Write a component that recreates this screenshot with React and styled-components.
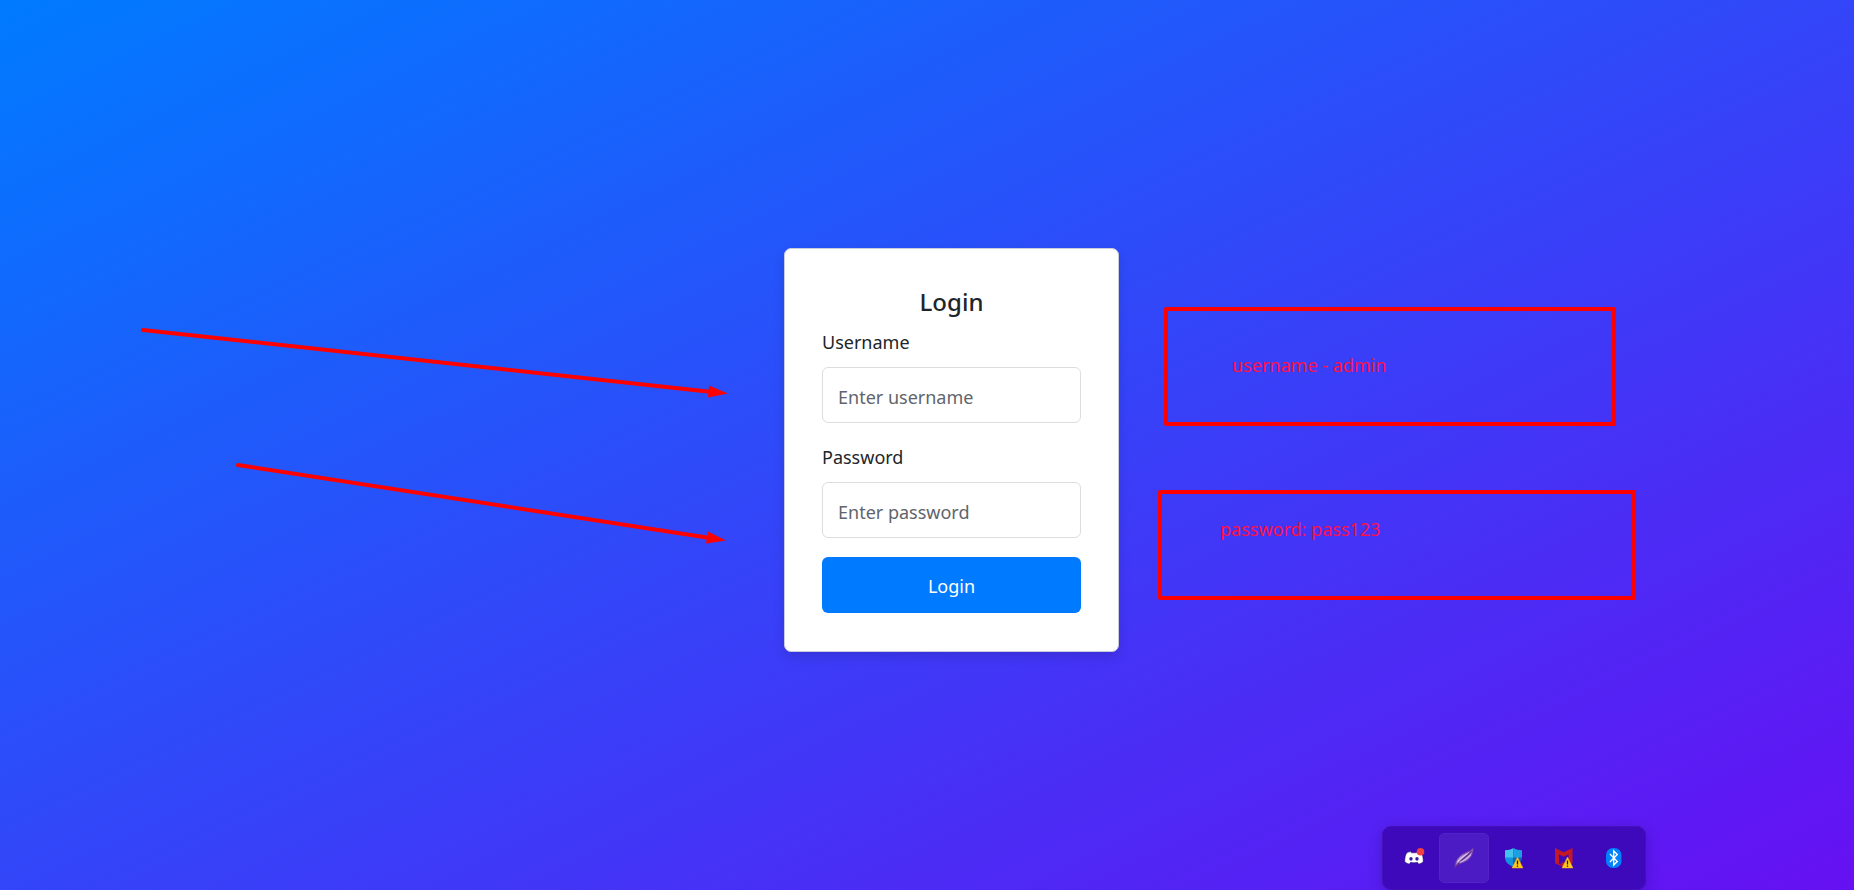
import React from "react";
import styled, { createGlobalStyle } from "styled-components";

const GlobalStyle = createGlobalStyle`
  *, *::before, *::after { box-sizing: border-box; }
  body {
    margin: 0;
    font-family: "Segoe UI", "Noto Sans", "Open Sans", sans-serif;
    font-size: 18px;
    line-height: 30px;
    color: #212529;
  }
`;

const Page = styled.main`
  position: relative;
  min-height: 100vh;
  display: flex;
  align-items: center;
  justify-content: center;
  padding: 10px 0 0 49px;
  overflow: hidden;
  background: linear-gradient(to bottom right, #007bff, #6610f2);
`;

const Card = styled.form`
  width: 335px;
  padding: 38px 37px;
  border: 1px solid #c9ccda;
  border-radius: 7px;
  background: #fff;
  box-shadow: 0 5px 12px rgba(0, 0, 0, 0.12);
`;

const Title = styled.h1`
  margin: 0 0 10px;
  font-size: 24px;
  font-weight: 500;
  line-height: 30px;
  text-align: center;
`;

const Fields = styled.div`
  display: flex;
  flex-direction: column;
  gap: 19px;
`;

const Label = styled.label`
  display: block;
  margin-bottom: 10px;
`;

const Input = styled.input`
  display: block;
  width: 100%;
  height: 56px;
  padding: 4px 15px 0;
  border: 1px solid #dcdddf;
  border-radius: 6px;
  background: #fff;
  color: #212529;
  font: inherit;
  &::placeholder { color: #5f656b; opacity: 1; }
`;

const Submit = styled.button`
  width: 100%;
  height: 56px;
  margin-top: 19px;
  padding: 2px 0 0;
  border: 0;
  border-radius: 6px;
  background: #007bff;
  color: #fff;
  font: inherit;
  cursor: pointer;
`;

const Arrows = styled.svg`
  position: absolute;
  inset: 0;
  width: 100%;
  height: 100%;
  pointer-events: none;
`;

const Note = styled.aside`
  position: absolute;
  left: ${(p) => p.$x}px;
  top: ${(p) => p.$y}px;
  width: ${(p) => p.$w}px;
  height: ${(p) => p.$h}px;
  padding: ${(p) => p.$pad};
  border: 4px solid #f00;
  border-radius: 2px;
  color: #ff0f46;
`;

const Tray = styled.div`
  position: absolute;
  right: 208px;
  bottom: 0;
  display: flex;
  padding: 6px;
  border: 1px solid #4511b4;
  border-radius: 9px;
  background: #3e08bb;
  box-shadow: 0 4px 14px rgba(30, 0, 110, 0.3);
`;

const TrayButton = styled.button`
  width: 50px;
  height: 50px;
  padding: 0;
  display: flex;
  align-items: center;
  justify-content: center;
  border: 1px solid ${(p) => (p.$active ? "#5423c5" : "transparent")};
  border-radius: 5px;
  background: ${(p) => (p.$active ? "#4d1bc3" : "transparent")};
`;

const Warning = () => (
  <g>
    <path d="M14.5 10 20 21H9Z" fill="#ffc81c" stroke="#e6a51c" strokeWidth=".5" strokeLinejoin="round" />
    <path d="M14.5 13.4v4M14.5 18.5v1.3" stroke="#241b10" strokeWidth="1.3" />
  </g>
);

const TrayIcon = ({ children }) => (
  <svg width="22" height="22" viewBox="0 0 22 22" aria-hidden="true">{children}</svg>
);

const DiscordIcon = () => (
  <TrayIcon>
    <path
      d="M7.8 4.6C6.1 4.8 4.6 5.4 3.5 6.2 2.3 8.3 1.7 11 1.8 14.8c1.2 1.2 2.8 2 4.6 2.3l1.1-1.8c2.2.6 4.8.6 7 0l1.1 1.8c1.8-.3 3.4-1.1 4.6-2.3.1-3.8-.5-6.5-1.7-8.6-1.1-.8-2.6-1.4-4.3-1.6l-.7 1.2h-5Z"
      fill="#fff" stroke="#25105f" strokeWidth=".5"
    />
    <ellipse cx="8" cy="11.8" rx="1.7" ry="1.9" fill="#3b1ca0" />
    <ellipse cx="14" cy="11.8" rx="1.7" ry="1.9" fill="#3b1ca0" />
    <circle cx="17.5" cy="4.8" r="3.8" fill="#f23f43" />
  </TrayIcon>
);

const FeatherIcon = () => (
  <TrayIcon>
    <path d="M2.2 20.6C1.7 15 4.5 10.2 9.5 7.2 13.3 4.9 17.7 4.5 20 1c.5 5-1.7 9.3-5.8 12.4C10.7 16 5.7 15.7 2.2 20.6Z" fill="#9a7ccb" stroke="#6f35a6" strokeWidth="1" />
    <path d="M4.5 15.5C7 10.500 12.5 7.8 17.5 5.3" fill="none" stroke="#d6c4e4" strokeWidth="1.400" />
    <path d="M2.3 20.5C6 14.500 12.7 10.800 18.6 4" fill="none" stroke="#6b2590" strokeWidth="1.200" />
    <path d="M6.7 15.5C10.500 13.700 15 11 17.8 7.6" fill="none" stroke="#cdbbe0" strokeWidth="1.200" />
  </TrayIcon>
);

const ShieldIcon = () => (
  <TrayIcon>
    <path d="M10.5 1C8 2.5 5 3.2 2 3.2V11h8.5Z" fill="#42c3ed" />
    <path d="M10.5 1C13 2.5 16 3.2 19 3.2V11h-8.5Z" fill="#1d9fe0" />
    <path d="M2 10.5h8.5V20C5.5 18 2 15 2 10.5Z" fill="#1492df" />
    <path d="M19 10.5h-8.5V20c5-2 8.5-5 8.5-9.5Z" fill="#0b65b8" />
    <Warning />
  </TrayIcon>
);

const ShieldMIcon = () => (
  <TrayIcon>
    <path d="m2 1 8.7 4.2L19.5 1v15.3L10.7 20 2 16.3Z" fill="#c31827" />
    <path d="M6 7.3 10.7 9.7 15.5 7.3V14l-4.8 2-2.2-.9v2.6L6 16.5Z" fill="#3e08bb" />
    <Warning />
  </TrayIcon>
);

const BluetoothIcon = () => (
  <TrayIcon>
    <rect x="3" y="1" width="15.5" height="20" rx="7" fill="#0082fc" />
    <path d="m7 7 7.3 7.5L10.7 18V4l3.6 3.6L7 15" fill="none" stroke="#fff" strokeWidth="1.4" />
  </TrayIcon>
);

const trayItems = [
  { label: "Discord", Icon: DiscordIcon },
  { label: "Feather", Icon: FeatherIcon, active: true },
  { label: "Windows Security", Icon: ShieldIcon },
  { label: "McAfee", Icon: ShieldMIcon },
  { label: "Bluetooth", Icon: BluetoothIcon },
];

export default function App() {
  return (
    <>
      <GlobalStyle />
      <Page>
        <Card onSubmit={(e) => e.preventDefault()}>
          <Title>Login</Title>
          <Fields>
            <div>
              <Label htmlFor="username">Username</Label>
              <Input id="username" type="text" placeholder="Enter username" />
            </div>
            <div>
              <Label htmlFor="password">Password</Label>
              <Input id="password" type="password" placeholder="Enter password" />
            </div>
          </Fields>
          <Submit type="submit">Login</Submit>
        </Card>
        <Arrows aria-hidden="true">
          <g fill="#f00" stroke="#f00" strokeWidth="4" strokeLinecap="round">
            <path d="M143 330 712 392" />
            <path d="M709 385.500 728 393.500 708 397.500Z" stroke="none" />
            <path d="M238 465 710 538" />
            <path d="M708 531.500 726 540.500 706 543.500Z" stroke="none" />
          </g>
        </Arrows>
        <Note $x={1164} $y={307} $w={452} $h={119} $pad="39px 64px">username - admin</Note>
        <Note $x={1158} $y={490} $w={478} $h={110} $pad="20px 58px">password: pass123</Note>
        <Tray>
          {trayItems.map(({ label, Icon, active }) => (
            <TrayButton key={label} type="button" aria-label={label} $active={active}>
              <Icon />
            </TrayButton>
          ))}
        </Tray>
      </Page>
    </>
  );
}
